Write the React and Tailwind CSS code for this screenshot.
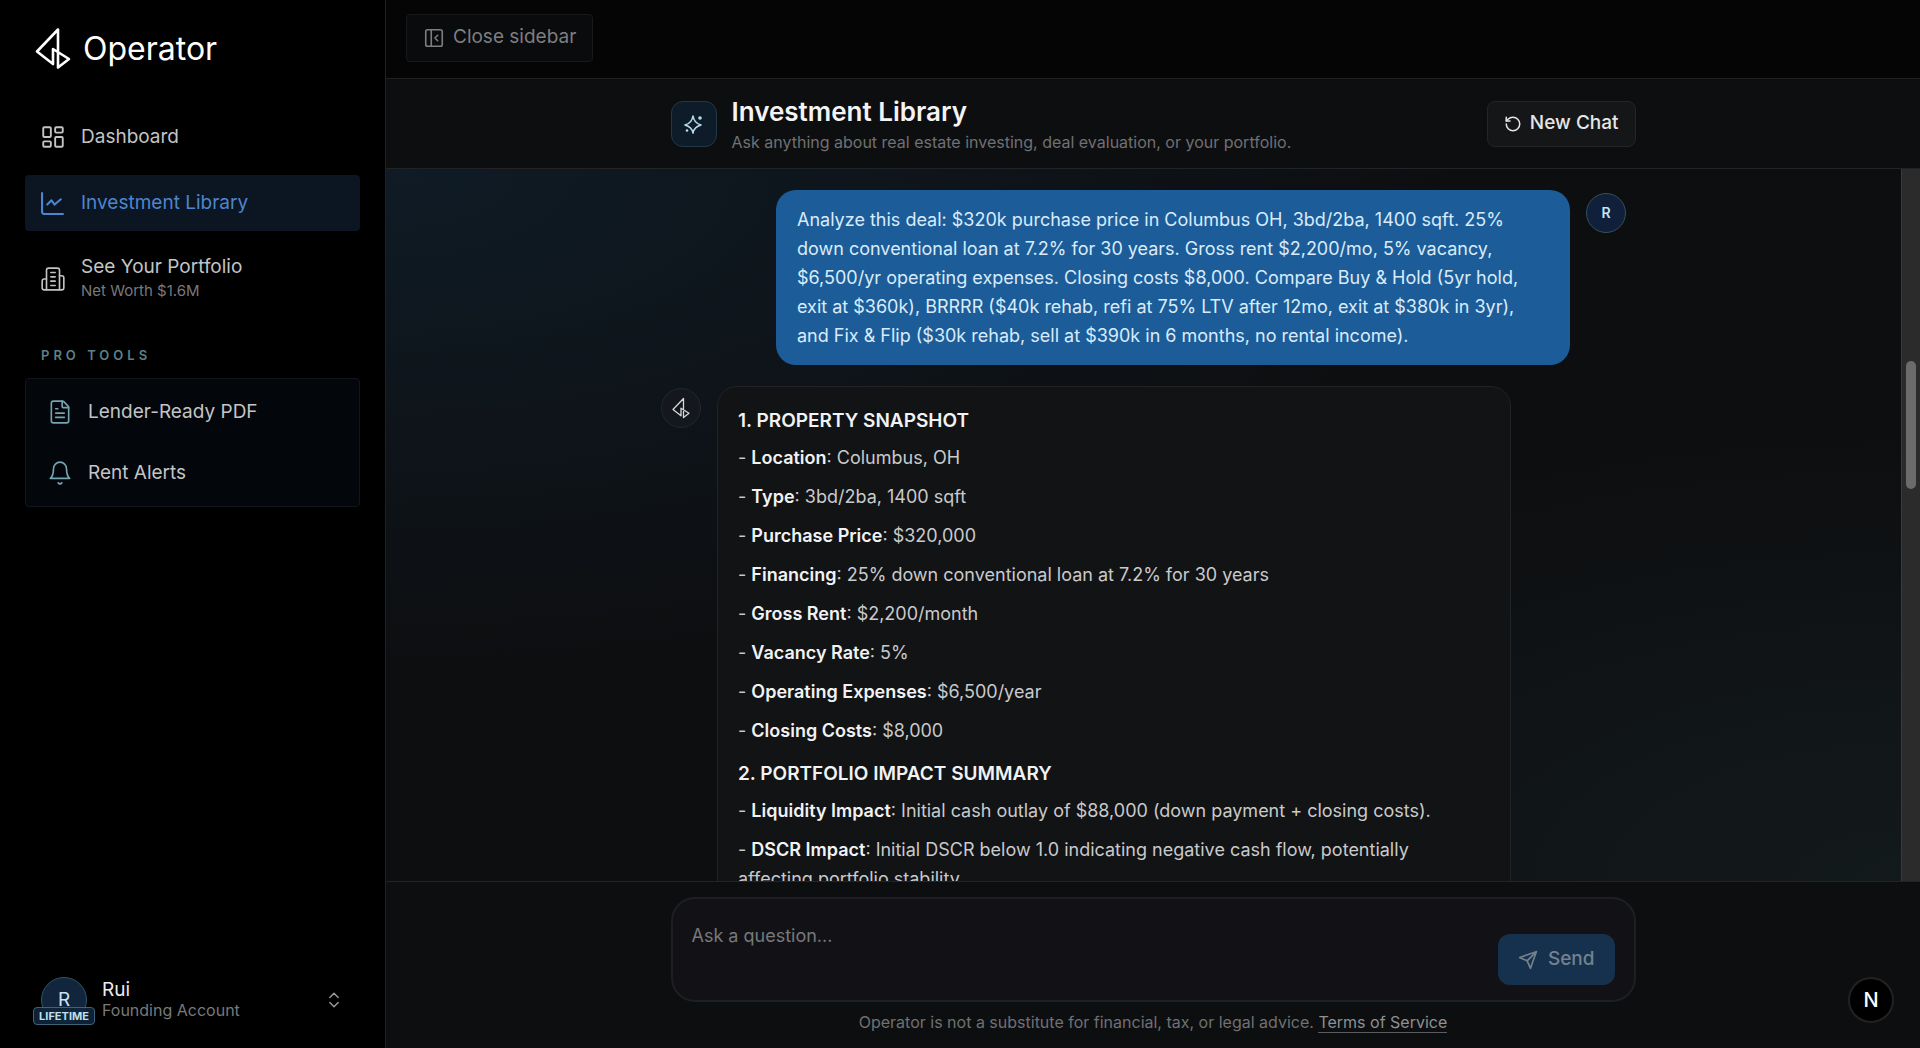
import { ChevronsUpDown, FileText, LayoutDashboard, PanelLeftClose, RotateCcw } from "lucide-react";

const snapshot = [
  { label: "Location", value: "Columbus, OH" },
  { label: "Type", value: "3bd/2ba, 1400 sqft" },
  { label: "Purchase Price", value: "$320,000" },
  { label: "Financing", value: "25% down conventional loan at 7.2% for 30 years" },
  { label: "Gross Rent", value: "$2,200/month" },
  { label: "Vacancy Rate", value: "5%" },
  { label: "Operating Expenses", value: "$6,500/year" },
  { label: "Closing Costs", value: "$8,000" },
];

const impact = [
  { label: "Liquidity Impact", value: "Initial cash outlay of $88,000 (down payment + closing costs)." },
  {
    label: "DSCR Impact",
    value: "Initial DSCR below 1.0 indicating negative cash flow, potentially affecting portfolio stability.",
  },
];

function Logo({ className }) {
  return (
    <svg viewBox="0 0 36 43" fill="none" stroke="currentColor" strokeWidth="2.6" strokeLinejoin="round" className={className}>
      <path d="M23 25V2.5L2 24.5L18 37V22L34 32L23 40.5V24" />
    </svg>
  );
}

function LibraryIcon({ className }) {
  return (
    <svg viewBox="0 0 22 22" fill="none" stroke="currentColor" strokeWidth="2" strokeLinecap="round" strokeLinejoin="round" className={className}>
      <path d="M1 1V19a2 2 0 0 0 2 2H21" />
      <path d="M6 12L10 8L13 12L19 7" />
    </svg>
  );
}

function BuildingIcon({ className }) {
  return (
    <svg viewBox="0 0 24 24" fill="none" stroke="currentColor" strokeWidth="1.5" strokeLinecap="round" strokeLinejoin="round" className={className}>
      <path d="M6 22V4a2 2 0 0 1 2-2h8a2 2 0 0 1 2 2v18Z" />
      <path d="M6 12H4a2 2 0 0 0-2 2v6a2 2 0 0 0 2 2h2" />
      <path d="M18 9h2a2 2 0 0 1 2 2v9a2 2 0 0 1-2 2h-2" />
      <path d="M10 6h4M10 10h4M10 14h4M10 18h4" />
    </svg>
  );
}

function BellIcon({ className }) {
  return (
    <svg viewBox="0 0 24 24" fill="none" stroke="currentColor" strokeWidth="1.5" strokeLinecap="round" strokeLinejoin="round" className={className}>
      <path d="M6 8a6 6 0 0 1 12 0c0 7 3 9 3 9H3s3-2 3-9" />
      <path d="M10.3 21a1.94 1.94 0 0 0 3.4 0" />
    </svg>
  );
}

function SparkleIcon({ className }) {
  return (
    <svg viewBox="0 0 20 20" fill="none" stroke="currentColor" strokeWidth="1.6" strokeLinejoin="round" className={className}>
      <path d="M9 2Q10 9 17 11Q10 13 9 19Q8 13 1 11Q8 9 9 2Z" />
      <circle cx="16" cy="4" r="1.8" fill="currentColor" stroke="none" />
      <circle cx="3" cy="16.5" r="1.3" fill="currentColor" stroke="none" />
    </svg>
  );
}

function SendIcon({ className }) {
  return (
    <svg viewBox="0 0 24 24" fill="none" stroke="currentColor" strokeWidth="2" strokeLinecap="round" strokeLinejoin="round" className={className}>
      <path d="m22 2-7 20-4-9-9-4Z" />
      <path d="M22 2 11 13" />
    </svg>
  );
}

function BulletList({ items }) {
  return (
    <div className="space-y-[10px]">
      {items.map((item) => (
        <p key={item.label}>
          - <strong className="font-semibold text-[#f1f2f3]">{item.label}</strong>: {item.value}
        </p>
      ))}
    </div>
  );
}

function Sidebar() {
  return (
    <aside className="flex w-[386px] shrink-0 flex-col border-r border-[#1f2123] bg-black px-[25px] pb-[25px]">
      <a href="#home" className="flex h-[97px] items-center gap-3 pl-[10px] text-white">
        <Logo className="h-[43px] w-9" />
        <span className="text-[32px]">Operator</span>
      </a>

      <nav aria-label="Main" className="mt-3 flex flex-col gap-[10px] text-[19px] text-[#c3c4c5]">
        <a href="#dashboard" className="flex h-14 items-center gap-[15px] px-[15px]">
          <LayoutDashboard size={26} strokeWidth={1.75} />
          Dashboard
        </a>
        <a href="#library" aria-current="page" className="flex h-14 items-center gap-[17px] rounded bg-[#0c1522] px-4 text-[#4c86cf]">
          <LibraryIcon className="size-[23px]" />
          Investment Library
        </a>
        <a href="#portfolio" className="flex h-[76px] items-center gap-[15px] px-[15px]">
          <BuildingIcon className="size-[26px]" />
          <span className="flex flex-col">
            <span className="leading-6">See Your Portfolio</span>
            <span className="text-[15px] leading-6 text-[#77797b]">Net Worth $1.6M</span>
          </span>
        </a>
      </nav>

      <h2 className="mt-7 pl-4 text-[13px] leading-5 font-semibold tracking-[4px] text-[#5d8088]">PRO TOOLS</h2>
      <nav aria-label="Pro tools" className="mt-[13px] flex flex-col gap-[5px] rounded border border-[#12161b] bg-[#03060b] p-[5px] text-[19px] text-[#c3c4c5]">
        <a href="#pdf" className="flex h-14 items-center gap-[15px] px-4">
          <FileText size={26} strokeWidth={1.5} className="text-[#75a5b0]" />
          Lender-Ready PDF
        </a>
        <a href="#alerts" className="flex h-14 items-center gap-[15px] px-4">
          <BellIcon className="size-[26px] text-[#75a5b0]" />
          Rent Alerts
        </a>
      </nav>

      <button type="button" className="mt-auto flex items-center gap-[15px] px-4 text-left">
        <span className="relative flex size-[46px] items-center justify-center rounded-full border border-[#31566a] bg-[#11253c] text-[19px] text-[#c5e3f1]">
          R
          <span className="absolute top-[29px] rounded border border-[#3b6478] bg-[#11253c]/90 px-[5px] text-[11px] leading-4 font-bold text-[#bfe0ee]">
            LIFETIME
          </span>
        </span>
        <span className="flex flex-1 flex-col">
          <span className="text-[19px] leading-5 text-[#ececec]">Rui</span>
          <span className="text-base leading-5 text-[#77797b]">Founding Account</span>
        </span>
        <ChevronsUpDown size={20} strokeWidth={1.75} className="text-[#9a9a9a]" />
      </button>
    </aside>
  );
}

function App() {
  return (
    <div className="flex h-screen overflow-hidden bg-[#0d0e10] font-['Inter',sans-serif] text-[#c9cacb]">
      <Sidebar />

      <main className="flex min-w-0 flex-1 flex-col">
        <div className="flex h-[79px] shrink-0 items-center border-b border-[#1f2122] bg-[#050505] px-5 pb-[3px]">
          <button type="button" className="flex h-12 items-center gap-2 rounded border border-[#18191a] bg-[#0a0b0c] px-4 text-[19px] text-[#7d7e80]">
            <PanelLeftClose size={22} strokeWidth={1.75} />
            Close sidebar
          </button>
        </div>

        <header className="flex h-[90px] shrink-0 items-center border-b border-[#202426] bg-[#0d0e10]">
          <div className="mx-auto flex w-full max-w-[965px] items-center gap-[15px]">
            <span className="flex size-[46px] items-center justify-center rounded-xl border border-[#223945] bg-[#0e1b28] text-[#b5dcea]">
              <SparkleIcon className="size-5" />
            </span>
            <div className="flex-1 pt-1">
              <h1 className="text-[26px] leading-8 font-semibold text-[#f4f4f5]">Investment Library</h1>
              <p className="text-base leading-7 text-[#6f7173]">
                Ask anything about real estate investing, deal evaluation, or your portfolio.
              </p>
            </div>
            <button type="button" className="flex h-[46px] items-center gap-2 rounded-lg border border-[#242527] bg-[#151618] px-4 text-[19px] font-medium text-[#e6e6e7]">
              <RotateCcw size={18} strokeWidth={2} />
              New Chat
            </button>
          </div>
        </header>

        <div className="flex min-h-0 flex-1">
          <section
            aria-label="Conversation"
            className="min-w-0 flex-1 overflow-hidden bg-[radial-gradient(ellipse_at_top_left,#0f1b25,transparent_50%),radial-gradient(ellipse_at_bottom_right,#131a1c,transparent_45%)]"
          >
            <div className="mx-auto flex max-w-[965px] flex-col gap-[21px] pt-[21px] text-lg leading-[29px]">
              <div className="flex justify-end gap-4">
                <p className="max-w-[794px] rounded-[20px] bg-[#1c5d99] px-[21px] py-[15px] text-[#d9ebfa]">
                  Analyze this deal: $320k purchase price in Columbus OH, 3bd/2ba, 1400 sqft. 25% down conventional loan
                  at 7.2% for 30 years. Gross rent $2,200/mo, 5% vacancy, $6,500/yr operating expenses. Closing costs
                  $8,000. Compare Buy &amp; Hold (5yr hold, exit at $360k), BRRRR ($40k rehab, refi at 75% LTV after
                  12mo, exit at $380k in 3yr), and Fix &amp; Flip ($30k rehab, sell at $390k in 6 months, no rental
                  income).
                </p>
                <span className="mt-[3px] flex size-10 shrink-0 items-center justify-center rounded-full border border-[#34505c] bg-[#10203a] text-sm font-semibold text-[#c5e3f1]">
                  R
                </span>
              </div>

              <div className="flex gap-4">
                <span className="mt-[2px] flex size-10 shrink-0 items-center justify-center rounded-full border border-[#24272a] bg-[#14171c] text-[#d8d8d8]">
                  <Logo className="h-[22px] w-[18px]" />
                </span>
                <article className="w-[794px] rounded-[20px] border border-[#222325] bg-[#121315] py-[19px] pr-7 pl-5">
                  <h3 className="mb-2 text-[19px] font-semibold text-[#f1f2f3]">1. PROPERTY SNAPSHOT</h3>
                  <BulletList items={snapshot} />
                  <h3 className="mt-[14px] mb-2 text-[19px] font-semibold text-[#f1f2f3]">2. PORTFOLIO IMPACT SUMMARY</h3>
                  <BulletList items={impact} />
                </article>
              </div>
            </div>
          </section>
          <div aria-hidden="true" className="flex w-[19px] shrink-0 flex-col border-l border-[#3a3a3a] bg-[#2b2b2b] px-1">
            <div className="h-[27%]" />
            <div className="h-[18%] rounded-full bg-[#6b6b6b]" />
          </div>
        </div>

        <footer className="shrink-0 border-t border-[#222426] bg-[#0d0e10] pt-[15px] pb-4">
          <form className="mx-auto flex w-full max-w-[965px] items-end rounded-3xl border-2 border-[#1e1f22] bg-[#121216] px-[19px] py-[15px]">
            <textarea
              aria-label="Ask a question"
              placeholder="Ask a question..."
              rows={1}
              className="h-[71px] flex-1 resize-none bg-transparent pt-[7px] text-lg leading-[29px] outline-none placeholder:text-[#77787b]"
            />
            <button type="button" disabled className="flex h-[51px] items-center gap-[10px] rounded-xl bg-[#16314d] px-5 text-[19px] font-medium text-[#75818e]">
              <SendIcon className="size-5" />
              Send
            </button>
          </form>
          <p className="mt-[10px] text-center text-base leading-5 text-[#6f7173]">
            Operator is not a substitute for financial, tax, or legal advice.{" "}
            <a href="#terms" className="border-b border-[#5b5d60] text-[#8e9093]">
              Terms of Service
            </a>
          </p>
        </footer>
      </main>

      <button
        type="button"
        aria-label="Open dev tools"
        className="fixed right-[26px] bottom-[25px] flex size-[46px] items-center justify-center rounded-full border-2 border-[#222] bg-black text-xl font-medium text-white"
      >
        N
      </button>
    </div>
  );
}

export default App;
